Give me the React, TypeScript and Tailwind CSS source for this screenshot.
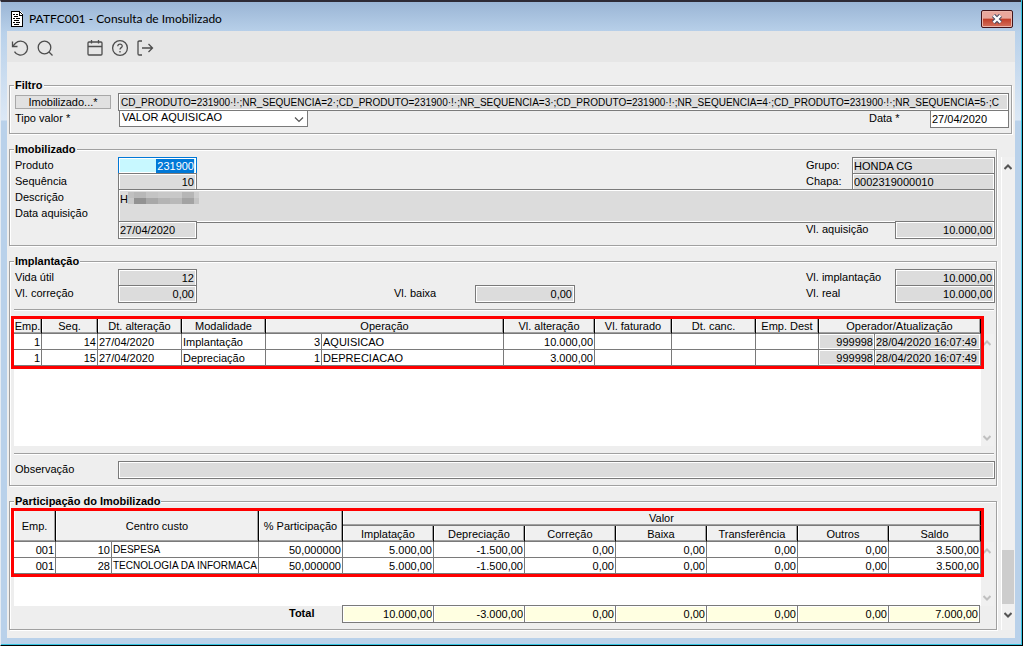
import { useState, type ReactNode } from 'react';
import clsx from 'clsx';

const ALTERACOES = [
  { emp: '1', seq: '14', data: '27/04/2020', modalidade: 'Implantação', cod: '3', operacao: 'AQUISICAO', valor: '10.000,00', operador: '999998', atualizacao: '28/04/2020 16:07:49' },
  { emp: '1', seq: '15', data: '27/04/2020', modalidade: 'Depreciação', cod: '1', operacao: 'DEPRECIACAO', valor: '3.000,00', operador: '999998', atualizacao: '28/04/2020 16:07:49' },
];

const PARTICIPACOES = [
  { emp: '001', cod: '10', centro: 'DESPESA', perc: '50,000000', valores: ['5.000,00', '-1.500,00', '0,00', '0,00', '0,00', '0,00', '3.500,00'] },
  { emp: '001', cod: '28', centro: 'TECNOLOGIA DA INFORMACA', perc: '50,000000', valores: ['5.000,00', '-1.500,00', '0,00', '0,00', '0,00', '0,00', '3.500,00'] },
];

const COLUNAS_VALOR = ['Implatação', 'Depreciação', 'Correção', 'Baixa', 'Transferência', 'Outros', 'Saldo'];
const TOTAIS = ['10.000,00', '-3.000,00', '0,00', '0,00', '0,00', '0,00', '7.000,00'];

const FILTRO =
  'CD_PRODUTO=231900·!·;NR_SEQUENCIA=2·;CD_PRODUTO=231900·!·;NR_SEQUENCIA=3·;CD_PRODUTO=231900·!·;NR_SEQUENCIA=4·;CD_PRODUTO=231900·!·;NR_SEQUENCIA=5·;C';

function Group({ title, children, className }: { title: string; children: ReactNode; className?: string }) {
  return (
    <fieldset
      className={clsx(
        'min-w-0 border border-[#a0a0a0] pl-[5px] shadow-[1px_1px_0_#fff,inset_1px_1px_0_#fff]',
        className
      )}
    >
      <legend className="-ml-px bg-[#eeeeee] px-px font-bold leading-[15px]">{title}</legend>
      {children}
    </fieldset>
  );
}

interface FieldProps {
  id: string;
  value: string;
  className?: string;
  right?: boolean;
  editable?: boolean;
}

function Field({ id, value, className, right, editable }: FieldProps) {
  return (
    <input
      id={id}
      defaultValue={value}
      readOnly={!editable}
      className={clsx(
        'relative h-[18px] shrink-0 border border-[#7a7a7a] pr-[2px] pl-px leading-4 shadow-[inset_0_0_0_1px_#fff] outline-none',
        editable ? 'bg-white' : 'bg-[#dcdcdc]',
        right && 'text-right',
        className
      )}
    />
  );
}

function Label({ htmlFor, children, className }: { htmlFor: string; children: ReactNode; className?: string }) {
  return (
    <label htmlFor={htmlFor} className={clsx('shrink-0 leading-4', className)}>
      {children}
    </label>
  );
}

function Chevron({ up, className }: { up?: boolean; className?: string }) {
  return (
    <svg viewBox="0 0 8 6" className={clsx('h-[6px] w-2 shrink-0', className)} fill="none" stroke="currentColor" strokeWidth="2">
      <path d={up ? 'M0.5 5 4 1.5 7.5 5' : 'M0.5 1 4 4.5 7.5 1'} />
    </svg>
  );
}

function GridScroll({ className }: { className?: string }) {
  return (
    <div className={clsx('flex w-[13px] shrink-0 flex-col items-center justify-between bg-[#f0f0f0] pr-[2px] text-[#c0c0c0]', className)}>
      <Chevron up />
      <Chevron />
    </div>
  );
}

function Divider() {
  return <div className="mr-px -ml-px h-[2px] border-t border-[#a0a0a0] bg-white" />;
}

const TH =
  'h-[15px] border-r border-b border-r-black border-b-[#7a7a7a] bg-[#f0f0f0] p-0 text-center font-normal leading-[14px] shadow-[inset_-1px_-1px_0_#a0a0a0,inset_1px_0_0_#fff]';

interface TdProps {
  children?: ReactNode;
  right?: boolean;
  gray?: boolean;
  small?: boolean;
}

function Td({ children, right, gray, small }: TdProps) {
  return (
    <td
      className={clsx(
        'h-4 overflow-hidden border-r border-b border-[#7a7a7a] px-px pt-px pb-0 leading-[14px] whitespace-nowrap',
        right && 'text-right',
        small && 'text-[10px]',
        gray ? 'bg-[#dcdcdc] shadow-[inset_0_0_0_1px_#fff]' : 'bg-white'
      )}
    >
      {children}
    </td>
  );
}

function TitleBar() {
  return (
    <header className="-ml-[3px] flex h-[31px] items-center pt-[7px] pr-[2px] pl-[7px]">
      <svg viewBox="0 0 12 16" className="h-4 w-3" shapeRendering="crispEdges">
        <path d="M0 0h9l3 3v13H0z" fill="#fff" />
        <path d="M0 0h9v1H1v14H0zM9 1h1v1H9zM10 2h1v1h-1zM8 1h1v3h3v1H8zM11 3h1v13H0v-1h11z" fill="#000" />
        <path d="M2 3h2v1H2zM5 3h2v1H5zM3 5h4v1H3zM2 7h2v1H2zM5 7h4v1H5zM3 9h5v1H3zM2 11h2v1H2zM5 11h4v1H5zM3 13h5v1H3z" fill="#000" />
      </svg>
      <h1 className="ml-[6px] flex-1 font-[Lato,sans-serif] text-[12px] leading-4">PATFC001 - Consulta de Imobilizado</h1>
      <button
        aria-label="Fechar"
        className="flex h-[18px] w-8 items-center justify-center rounded-[2px] border border-[#43141a] bg-linear-to-b from-[#e9a79c] from-45% via-[#c03c27] via-50% to-[#d4705c] shadow-[inset_0_0_0_1px_#eab5ab]"
      >
        <svg viewBox="0 0 12 10" className="h-[10px] w-3" fill="none">
          <path d="M2.5 1.5l7 7M9.5 1.5l-7 7" stroke="#4b4f66" strokeWidth="4.4" />
          <path d="M2.5 1.5l7 7M9.5 1.5l-7 7" stroke="#fff" strokeWidth="2.4" />
        </svg>
      </button>
    </header>
  );
}

function ToolButton({ label, children, className }: { label: string; children: ReactNode; className?: string }) {
  return (
    <button aria-label={label} className={clsx('flex h-5 w-[25px] items-center justify-center', className)}>
      <svg viewBox="0 0 18 18" className="size-[18px]" fill="none" stroke="#4d4d4d" strokeWidth="1.3">
        {children}
      </svg>
    </button>
  );
}

function Toolbar() {
  return (
    <div className="flex h-[31px] items-center bg-[#e6e6e6] pt-[3px]">
      <ToolButton label="Desfazer">
        <path d="M1.5 2.5v5h5" />
        <path d="M1.8 7.2 4.5 4.2a7 7 0 1 1-1 8.4" />
      </ToolButton>
      <ToolButton label="Pesquisar">
        <circle cx="8.5" cy="8.5" r="6.3" />
        <path d="M13 13l3.5 3.5" />
      </ToolButton>
      <ToolButton label="Calendário" className="ml-[25px]">
        <rect x="2" y="3" width="14" height="13" rx="1" />
        <path d="M2 7.5h14M5.5 1v3.5M12.5 1v3.5" />
      </ToolButton>
      <ToolButton label="Ajuda">
        <circle cx="9" cy="9" r="7.4" />
        <path d="M6.8 7.2c0-3 4.6-2.7 4.4 0-.1 1.5-2.2 1.4-2.2 3.3M9 12v1.4" />
      </ToolButton>
      <ToolButton label="Sair">
        <path d="M6 2H3.2Q2 2 2 3.2v11.6Q2 16 3.2 16H6M6 9h10.5M12.5 5l4 4-4 4" />
      </ToolButton>
    </div>
  );
}

function Filtro() {
  const [tipo, setTipo] = useState('aquisicao');
  return (
    <Group title="Filtro" className="mr-[3px] pr-[2px] pb-[6px]">
      <div className="flex h-[17px] items-start">
        <button className="mt-[2px] mr-[7px] h-[14px] w-24 shrink-0 border border-[#a8a8a8] bg-[#e1e1e1] leading-3">
          Imobilizado...*
        </button>
        <input
          aria-label="Imobilizado"
          readOnly
          defaultValue={FILTRO}
          className="h-[18px] min-w-0 flex-1 border border-[#7a7a7a] bg-[#dcdcdc] px-[2px] text-[10px] shadow-[inset_0_0_0_1px_#fff] outline-none"
        />
      </div>
      <div className="flex h-[17px] items-start">
        <Label htmlFor="tipo" className="w-[104px]">Tipo valor *</Label>
        <div className="relative">
          <select
            id="tipo"
            value={tipo}
            onChange={(e) => setTipo(e.target.value)}
            className="block h-[17px] w-[189px] appearance-none border border-[#7a7a7a] bg-white px-[2px] pb-[2px] leading-[13px] outline-none"
          >
            <option value="aquisicao">VALOR AQUISICAO</option>
          </select>
          <svg viewBox="0 0 10 6" className="pointer-events-none absolute top-[7px] right-1 h-[6px] w-[10px]" fill="none" stroke="#555">
            <path d="M1 0.5 5 4.5 9 0.5" strokeWidth="1.2" />
          </svg>
        </div>
        <Label htmlFor="data" className="ml-auto w-[61px]">Data *</Label>
        <Field id="data" value="27/04/2020" editable className="w-[79px]" />
      </div>
    </Group>
  );
}

// Masked part of the description: [x, width, upper shade, lower shade]
const MASCARA: [number, number, string, string][] = [
  [0, 6, '#c0c0c0', '#c8c8c8'],
  [6, 12, '#b8b8b8', '#929292'],
  [18, 12, '#c4c4c4', '#a8a8a8'],
  [30, 12, '#c8c8c8', '#b4b4b4'],
  [42, 12, '#c8c8c8', '#b9b9b9'],
  [54, 12, '#b6b6b6', '#a3a3a3'],
  [66, 5, '#cecece', '#c4c4c4'],
];

function Imobilizado() {
  return (
    <Group title="Imobilizado" className="pr-px pb-[7px]">
      <div className="flex h-4 items-start">
        <Label htmlFor="produto" className="w-[103px]">Produto</Label>
        <div className="flex h-[17px] w-[79px] justify-end border border-[#0078d7] bg-[#c8f8ff] px-[2px] py-px shadow-[inset_0_0_0_1px_#fff]">
          <input
            id="produto"
            defaultValue="231900"
            className="h-[15px] w-[38px] bg-[#0078d7] text-right text-white outline-none"
          />
        </div>
        <Label htmlFor="grupo" className="ml-auto w-[46px]">Grupo:</Label>
        <Field id="grupo" value="HONDA CG" className="w-[143px]" />
      </div>
      <div className="flex h-4 items-start">
        <Label htmlFor="sequencia" className="w-[103px]">Sequência</Label>
        <Field id="sequencia" value="10" right className="w-[79px]" />
        <Label htmlFor="chapa" className="ml-auto w-[46px]">Chapa:</Label>
        <Field id="chapa" value="0002319000010" className="w-[143px]" />
      </div>
      <div className="flex h-8 items-start">
        <div className="flex w-[103px] shrink-0 flex-col">
          <Label htmlFor="descricao">Descrição</Label>
          <Label htmlFor="aquisicao">Data aquisição</Label>
        </div>
        <div className="relative h-[34px] min-w-0 flex-1">
          <textarea
            id="descricao"
            readOnly
            defaultValue="H"
            className="block size-full resize-none border border-[#7a7a7a] bg-[#dcdcdc] px-px pt-px leading-4 shadow-[inset_0_0_0_1px_#fff] outline-none"
          />
          <svg viewBox="0 0 71 12" className="absolute top-[3px] left-[10px] h-3 w-[71px]" shapeRendering="crispEdges">
            {MASCARA.map(([x, w, a, b]) => (
              <g key={x}>
                <rect x={x} y="0" width={w} height="6" fill={a} />
                <rect x={x} y="6" width={w} height="6" fill={b} />
              </g>
            ))}
          </svg>
        </div>
      </div>
      <div className="flex h-[17px] items-start pl-[103px]">
        <Field id="aquisicao" value="27/04/2020" className="w-[79px]" />
        <Label htmlFor="vlaquisicao" className="ml-auto w-[89px]">Vl. aquisição</Label>
        <Field id="vlaquisicao" value="10.000,00" right className="w-[100px]" />
      </div>
    </Group>
  );
}

function Implantacao() {
  return (
    <Group title="Implantação" className="pr-px pb-[6px]">
      <div className="flex h-4 items-start">
        <Label htmlFor="vida" className="w-[103px]">Vida útil</Label>
        <Field id="vida" value="12" right className="w-[79px]" />
        <Label htmlFor="implantacao" className="ml-auto w-[89px]">Vl. implantação</Label>
        <Field id="implantacao" value="10.000,00" right className="w-[100px]" />
      </div>
      <div className="mb-2 flex h-4 items-start">
        <Label htmlFor="correcao" className="w-[103px]">Vl. correção</Label>
        <Field id="correcao" value="0,00" right className="w-[79px]" />
        <Label htmlFor="baixa" className="ml-[197px] w-[81px]">Vl. baixa</Label>
        <Field id="baixa" value="0,00" right className="w-[100px]" />
        <Label htmlFor="real" className="ml-auto w-[89px]">Vl. real</Label>
        <Field id="real" value="10.000,00" right className="w-[100px]" />
      </div>
      <Divider />

      {/* Histórico de alterações */}
      <div className="mt-2 mb-[7px] -ml-px flex h-[127px] pr-px">
        <div className="min-w-0 flex-1 bg-white">
          <table className="relative w-full table-fixed border-separate border-spacing-0 outline-[3px] outline-[#ff0000] outline-solid">
            <colgroup>
              <col className="w-7" />
              <col className="w-14" />
              <col className="w-[84px]" />
              <col className="w-[84px]" />
              <col className="w-14" />
              <col />
              <col className="w-[91px]" />
              <col className="w-[77px]" />
              <col className="w-[84px]" />
              <col className="w-[63px]" />
              <col className="w-14" />
              <col className="w-[106px]" />
            </colgroup>
            <thead>
              <tr>
                <th className={TH}>Emp.</th>
                <th className={TH}>Seq.</th>
                <th className={TH}>Dt. alteração</th>
                <th className={TH}>Modalidade</th>
                <th className={TH} colSpan={2}>Operação</th>
                <th className={TH}>Vl. alteração</th>
                <th className={TH}>Vl. faturado</th>
                <th className={TH}>Dt. canc.</th>
                <th className={TH}>Emp. Dest</th>
                <th className={TH} colSpan={2}>Operador/Atualização</th>
              </tr>
            </thead>
            <tbody>
              {ALTERACOES.map((a) => (
                <tr key={a.seq}>
                  <Td right>{a.emp}</Td>
                  <Td right>{a.seq}</Td>
                  <Td>{a.data}</Td>
                  <Td>{a.modalidade}</Td>
                  <Td right>{a.cod}</Td>
                  <Td>{a.operacao}</Td>
                  <Td right>{a.valor}</Td>
                  <Td />
                  <Td />
                  <Td />
                  <Td right gray>{a.operador}</Td>
                  <Td gray>{a.atualizacao}</Td>
                </tr>
              ))}
            </tbody>
          </table>
        </div>
        <GridScroll className="mt-[15px] pt-[6px] pb-[5px]" />
      </div>

      <Divider />
      <div className="mt-[6px] flex items-start">
        <Label htmlFor="observacao" className="w-[103px]">Observação</Label>
        <Field id="observacao" value="" className="min-w-0 flex-1" />
      </div>
    </Group>
  );
}

function Participacao() {
  return (
    <Group title="Participação do Imobilizado" className="pb-[6px]">
      <div className="mt-[2px] -ml-px flex h-[95px] pr-[2px]">
        <div className="min-w-0 flex-1 bg-white">
          <table className="relative w-full table-fixed border-separate border-spacing-0 outline-[3px] outline-[#ff0000] outline-solid">
            <colgroup>
              <col className="w-[42px]" />
              <col className="w-14" />
              <col />
              <col className="w-[84px]" />
              {COLUNAS_VALOR.map((c) => (
                <col key={c} className={c === 'Saldo' ? 'w-[92px]' : 'w-[91px]'} />
              ))}
            </colgroup>
            <thead>
              <tr>
                <th className={TH} rowSpan={2}>Emp.</th>
                <th className={TH} rowSpan={2} colSpan={2}>Centro custo</th>
                <th className={TH} rowSpan={2}>% Participação</th>
                <th className={TH} colSpan={7}>Valor</th>
              </tr>
              <tr className="h-4">
                {COLUNAS_VALOR.map((c) => (
                  <th key={c} className={TH}>{c}</th>
                ))}
              </tr>
            </thead>
            <tbody>
              {PARTICIPACOES.map((p) => (
                <tr key={p.cod}>
                  <Td right>{p.emp}</Td>
                  <Td right>{p.cod}</Td>
                  <Td small>{p.centro}</Td>
                  <Td right>{p.perc}</Td>
                  {p.valores.map((v, i) => (
                    <Td key={i} right>{v}</Td>
                  ))}
                </tr>
              ))}
            </tbody>
          </table>
        </div>
        <GridScroll className="mt-[31px] pt-[6px] pb-[5px]" />
      </div>
      <div className="-mt-px flex items-start justify-end pr-4">
        <span className="w-[53px] font-bold leading-[17px]">Total</span>
        {TOTAIS.map((t, i) => (
          <input
            key={i}
            readOnly
            aria-label={`Total ${COLUNAS_VALOR[i]}`}
            defaultValue={t}
            className="-mr-px h-[18px] w-[92px] border border-[#7a7a7a] bg-[#ffffe1] px-px text-right shadow-[inset_0_0_0_1px_#fff] outline-none last:mr-0"
          />
        ))}
      </div>
    </Group>
  );
}

export default function App() {
  return (
    <div className="min-h-screen border-t-2 border-r border-b border-l border-t-[#2d2a35] border-r-black border-b-black border-l-[#e4ebf3] bg-[linear-gradient(#9ab5d5,#b9d1ea_31px,#dce8f5_118px,#b9d1ea_119px)] font-['Liberation_Sans',Arial,sans-serif] text-[11px] text-black">
      <div className="border-r border-b border-[#35c3e0] pr-[6px] pb-[6px] pl-[6px]">
        <div className="-mt-[2px]">
          <TitleBar />
        </div>
        <main className="bg-[#eeeeee]">
          <Toolbar />
          <div className="flex flex-col gap-2 pt-4 pb-2 pl-[2px]">
            <Filtro />
            <div className="flex">
              <div className="flex min-w-0 flex-1 flex-col gap-2">
                <Imobilizado />
                <Implantacao />
                <Participacao />
              </div>
              <div className="mt-[15px] ml-1 flex w-[14px] shrink-0 flex-col items-center border-l border-white bg-[#f0f0f0] pt-[7px] pr-px pb-[12px] text-[#555]">
                <Chevron up />
                <div className="mt-auto mb-2 h-[54px] w-full bg-[#cdcdcd]" />
                <Chevron />
              </div>
            </div>
          </div>
        </main>
      </div>
    </div>
  );
}
